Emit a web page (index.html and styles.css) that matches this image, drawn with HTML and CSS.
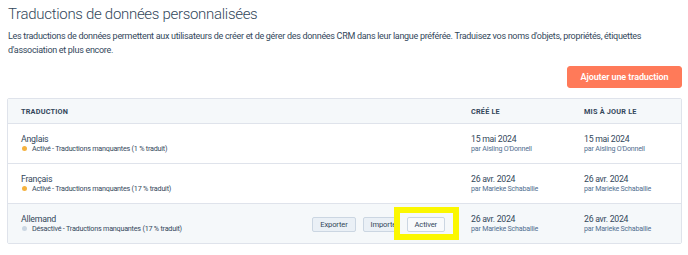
FILE: index.html
```html
<!DOCTYPE html>
<html lang="fr">
<head>
<meta charset="utf-8">
<link rel="stylesheet" href="styles.css">
</head>
<body>
<div class="page">
  <h1 class="title">Traductions de données personnalisées</h1>
  <p class="desc">Les traductions de données permettent aux utilisateurs de créer et de gérer des données CRM dans leur langue préférée. Traduisez vos noms d'objets, propriétés, étiquettes d'association et plus encore.</p>
  <div class="toolbar">
    <button class="btn-primary">Ajouter une traduction</button>
  </div>
  <div class="table">
    <div class="row head">
      <div class="cell">TRADUCTION</div>
      <div class="cell">CRÉÉ LE</div>
      <div class="cell">MIS À JOUR LE</div>
    </div>
    <div class="row">
      <div class="cell main">
        <div class="lang">
          <div class="name">Anglais</div>
          <div class="status"><span class="dot on"></span>Activé - Traductions manquantes (1 % traduit)</div>
        </div>
      </div>
      <div class="cell"><div class="date">15 mai 2024</div><div class="by">par Aisling O'Donnell</div></div>
      <div class="cell"><div class="date">15 mai 2024</div><div class="by">par Aisling O'Donnell</div></div>
    </div>
    <div class="row">
      <div class="cell main">
        <div class="lang">
          <div class="name">Français</div>
          <div class="status"><span class="dot on"></span>Activé - Traductions manquantes (17 % traduit)</div>
        </div>
      </div>
      <div class="cell"><div class="date">26 avr. 2024</div><div class="by">par Marieke Schaballie</div></div>
      <div class="cell"><div class="date">26 avr. 2024</div><div class="by">par Marieke Schaballie</div></div>
    </div>
    <div class="row hover">
      <div class="cell main">
        <div class="lang">
          <div class="name">Allemand</div>
          <div class="status"><span class="dot off"></span>Désactivé - Traductions manquantes (17 % traduit)</div>
        </div>
        <div class="actions">
          <button class="btn-sec">Exporter</button>
          <button class="btn-sec">Importer</button>
          <span class="hl-wrap">
            <span class="highlight"></span>
            <button class="btn-sec white">Activer</button>
          </span>
        </div>
      </div>
      <div class="cell"><div class="date">26 avr. 2024</div><div class="by">par Marieke Schaballie</div></div>
      <div class="cell"><div class="date">26 avr. 2024</div><div class="by">par Marieke Schaballie</div></div>
    </div>
  </div>
</div>
</body>
</html>
```

FILE: styles.css
```css
* { box-sizing: border-box; }
html, body { margin: 0; background: #fff; }
body {
  font-family: Roboto, "Noto Sans", sans-serif;
  color: #33475b;
}
.page { padding: 5px 6px 0 8px; }
.title {
  margin: 0;
  font-size: 15px;
  font-weight: 300;
  letter-spacing: -0.3px;
  line-height: 18px;
  color: #33475b;
}
.desc {
  margin: 6px 0 0;
  font-size: 9px;
  letter-spacing: -0.3px;
  line-height: 14px;
  font-weight: 400;
  width: 655px;
  color: #33475b;
}
.toolbar {
  display: flex;
  justify-content: flex-end;
  margin-top: 9px;
}
.btn-primary {
  background: #ff7a59;
  color: #fff;
  border: 1px solid #ff7a59;
  border-radius: 3px;
  font-family: inherit;
  font-weight: 600;
  font-size: 9px;
  letter-spacing: -0.1px;
  height: 22px;
  width: 115px;
  padding: 0;
}
.table {
  margin: 10px 0 0 -1px;
  border: 1px solid #dfe3eb;
  border-radius: 2px;
}
.row {
  display: grid;
  grid-template-columns: 450px 113px 1fr;
  border-top: 1px solid #dfe3eb;
  height: 40px;
}
.row.head {
  border-top: none;
  background: #f5f8fa;
  height: 24px;
}
.row.hover { background: #f5f8fa; }
.cell {
  padding: 0 13px;
  display: flex;
  flex-direction: column;
  justify-content: center;
}
.head .cell {
  font-size: 7.3px;
  font-weight: 700;
  letter-spacing: 0.2px;
  color: #33475b;
}
.cell.main {
  flex-direction: row;
  align-items: center;
  justify-content: space-between;
}
.name { font-size: 8.8px; letter-spacing: -0.25px; line-height: 10px; color: #33475b; }
.status {
  font-size: 7.2px;
  letter-spacing: -0.22px;
  line-height: 10px;
  color: #33475b;
  display: flex;
  align-items: center;
}
.dot {
  width: 5px; height: 5px; border-radius: 50%;
  margin: 0 5px 0 1px;
  display: inline-block;
}
.dot.on { background: #f5b23f; }
.dot.off { background: #cbd6e2; }
.date { font-size: 8.7px; letter-spacing: -0.25px; line-height: 10px; color: #33475b; }
.by { font-size: 7.1px; letter-spacing: -0.2px; line-height: 10px; color: #516f90; }
.actions { display: flex; gap: 7px; align-items: center; margin-top: 2px; }
.btn-sec {
  font-family: inherit;
  font-size: 7.6px;
  letter-spacing: -0.15px;
  color: #33475b;
  background: #eaf0f6;
  border: 1px solid #cbd6e2;
  border-radius: 2px;
  height: 15px;
  padding: 0 7px;
}
.btn-sec.white { background: #f8fafc; position: relative; z-index: 1; }
.hl-wrap { position: relative; display: inline-flex; margin-left: -7px; }
.highlight {
  position: absolute;
  left: -13px; top: -10px; right: -14px; bottom: -8px;
  border: 6px solid #fbf700;
  background: #f5f8fa;
}
```
